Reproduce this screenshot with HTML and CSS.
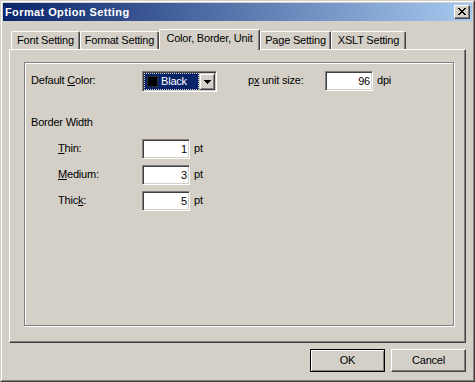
FILE: index.html
```html
<!DOCTYPE html>
<html>
<head>
<meta charset="utf-8">
<title>Format Option Setting</title>
<link rel="stylesheet" href="styles.css">
</head>
<body>
<div class="window">
  <div class="frame">
    <div class="titlebar">
      <span class="title">Format Option Setting</span>
      <button class="close" aria-label="Close"><svg width="8" height="7" viewBox="0 0 8 7"><path fill="#000" d="M0 0h2v1h-2zM6 0h2v1h-2zM1 1h2v1h-2zM5 1h2v1h-2zM2 2h4v1h-4zM3 3h2v1h-2zM2 4h4v1h-4zM1 5h2v1h-2zM5 5h2v1h-2zM0 6h2v1h-2zM6 6h2v1h-2z"/></svg></button>
    </div>
    <div class="client">
      <div class="tabs">
        <div class="tab t1">Font Setting</div>
        <div class="tab t2">Format Setting</div>
        <div class="tab t3 active">Color, Border, Unit</div>
        <div class="tab t4">Page Setting</div>
        <div class="tab t5">XSLT Setting</div>
      </div>
      <div class="panel">
        <div class="group">
          <div class="row row-color">
            <span class="label w-color">Default <u>C</u>olor:</span>
            <div class="combo">
              <div class="combo-sel"><span class="swatch"></span><span class="combo-text">Black</span></div>
              <div class="combo-btn"><svg width="7" height="4" viewBox="0 0 7 4"><path fill="#000" d="M0 0h7v1h-1v1h-1v1h-1v1h-1v-1h-1v-1h-1v-1h-1z"/></svg></div>
            </div>
            <span class="label w-px">p<u>x</u> unit size:</span>
            <div class="edit">96</div>
            <span class="unit">dpi</span>
          </div>
          <div class="heading">Border Width</div>
          <div class="row row-w first">
            <span class="label w-bw"><u>T</u>hin:</span>
            <div class="edit">1</div>
            <span class="unit">pt</span>
          </div>
          <div class="row row-w">
            <span class="label w-bw"><u>M</u>edium:</span>
            <div class="edit">3</div>
            <span class="unit">pt</span>
          </div>
          <div class="row row-w">
            <span class="label w-bw">Thic<u>k</u>:</span>
            <div class="edit">5</div>
            <span class="unit">pt</span>
          </div>
        </div>
      </div>
      <div class="footer">
        <button class="btn default">OK</button>
        <button class="btn">Cancel</button>
      </div>
    </div>
  </div>
</div>
</body>
</html>
```
FILE: styles.css
```css
* { box-sizing: border-box; }
html, body { margin: 0; padding: 0; }
body {
  width: 475px;
  height: 382px;
  background: #d4d0c8;
  font-family: "Liberation Sans", Arial, sans-serif;
  font-size: 11px;
  letter-spacing: -0.2px;
  color: #000;
}
.window {
  width: 475px;
  height: 382px;
  border: 1px solid;
  border-color: #d4d0c8 #404040 #404040 #d4d0c8;
  background: #d4d0c8;
}
.frame {
  height: 100%;
  border: 1px solid;
  border-color: #fff #808080 #808080 #fff;
  padding: 1px;
  display: flex;
  flex-direction: column;
}
.titlebar {
  height: 18px;
  flex: none;
  background: linear-gradient(to right, #0a246a, #a6caf0);
  display: flex;
  align-items: center;
  justify-content: space-between;
  padding: 0 2px;
}
.title {
  color: #fff;
  font-weight: bold;
  letter-spacing: 0.4px;
  line-height: 16px;
  padding-bottom: 1px;
}
.close {
  width: 16px;
  height: 14px;
  padding: 0 1px 1px 0;
  margin: 0;
  border: 1px solid;
  border-color: #fff #404040 #404040 #fff;
  box-shadow: inset -1px -1px #808080;
  background: #d4d0c8;
  display: flex;
  align-items: center;
  justify-content: center;
}
.close svg, .combo-btn svg { display: block; }
.client {
  flex: 1;
  display: flex;
  flex-direction: column;
  padding: 8px 6px 8px 6px;
}
.tabs {
  display: flex;
  align-items: flex-end;
  height: 20px;
  flex: none;
  padding-left: 2px;
  position: relative;
  z-index: 1;
}
.tab {
  height: 18px;
  border: 1px solid #fff;
  border-right-color: #404040;
  border-bottom: none;
  border-radius: 2px 2px 0 0;
  box-shadow: inset -1px 0 #808080;
  text-align: center;
  line-height: 13px;
  padding-top: 2px;
  white-space: nowrap;
  background: #d4d0c8;
}
.tab.active {
  height: 21px;
  margin-bottom: -1px;
  padding-top: 2px;
}
.t1 { width: 69px; }
.t2 { width: 79px; }
.t3 { width: 101px; }
.t4 { width: 71px; }
.t5 { width: 75px; }
.panel {
  height: 294px;
  flex: none;
  border: 1px solid;
  border-color: #fff #404040 #404040 #fff;
  box-shadow: inset -1px -1px #808080;
  padding: 12px 11px 16px 14px;
  display: flex;
}
.group {
  flex: 1;
  border: 1px solid #808080;
  box-shadow: inset 1px 1px #fff, 1px 1px #fff;
  padding: 8px 0 0 6px;
}
.row {
  display: flex;
  align-items: flex-start;
}
.row-color { height: 21px; }
.label { line-height: 19px; flex: none; white-space: nowrap; }
.w-color { width: 111px; }
.w-px { width: 77px; margin-left: 31px; }
.combo {
  width: 75px;
  height: 21px;
  flex: none;
  border: 1px solid;
  border-color: #808080 #fff #fff #808080;
  box-shadow: inset 1px 1px #404040, inset -1px -1px #d4d0c8;
  background: #fff;
  padding: 1px;
  display: flex;
}
.combo-sel {
  flex: 1;
  background: #0a246a;
  border: 1px dotted #d4d0c8;
  display: flex;
  align-items: center;
  padding-left: 2px;
  color: #fff;
}
.swatch {
  width: 11px;
  height: 11px;
  flex: none;
  background: #000;
  border: 1px solid #303030;
}
.combo-text { margin-left: 3px; line-height: 13px; }
.combo-btn {
  width: 16px;
  flex: none;
  border: 1px solid;
  border-color: #d4d0c8 #404040 #404040 #d4d0c8;
  box-shadow: inset 1px 1px #fff, inset -1px -1px #808080;
  background: #d4d0c8;
  display: flex;
  align-items: center;
  justify-content: center;
}
.edit {
  width: 48px;
  height: 20px;
  flex: none;
  border: 1px solid;
  border-color: #808080 #fff #fff #808080;
  box-shadow: inset 1px 1px #404040, inset -1px -1px #d4d0c8;
  background: #fff;
  text-align: right;
  padding: 1px 2px 0 0;
  line-height: 16px;
}
.unit { margin-left: 4px; line-height: 19px; }
.heading { margin-top: 24px; line-height: 13px; }
.row-w { margin-top: 6px; padding-left: 27px; height: 20px; }
.row-w.first { margin-top: 10px; }
.w-bw { width: 84px; line-height: 18px; }
.footer {
  display: flex;
  justify-content: flex-end;
  gap: 6px;
  margin-top: 6px;
}
.btn {
  width: 75px;
  height: 23px;
  margin: 0;
  padding: 0;
  font: inherit;
  letter-spacing: inherit;
  color: #000;
  line-height: 19px;
  background: #d4d0c8;
  border: 1px solid;
  border-color: #fff #404040 #404040 #fff;
  box-shadow: inset -1px -1px #808080;
}
.btn.default {
  border-color: #000;
  box-shadow: inset 1px 1px #fff, inset -1px -1px #808080;
}
```
